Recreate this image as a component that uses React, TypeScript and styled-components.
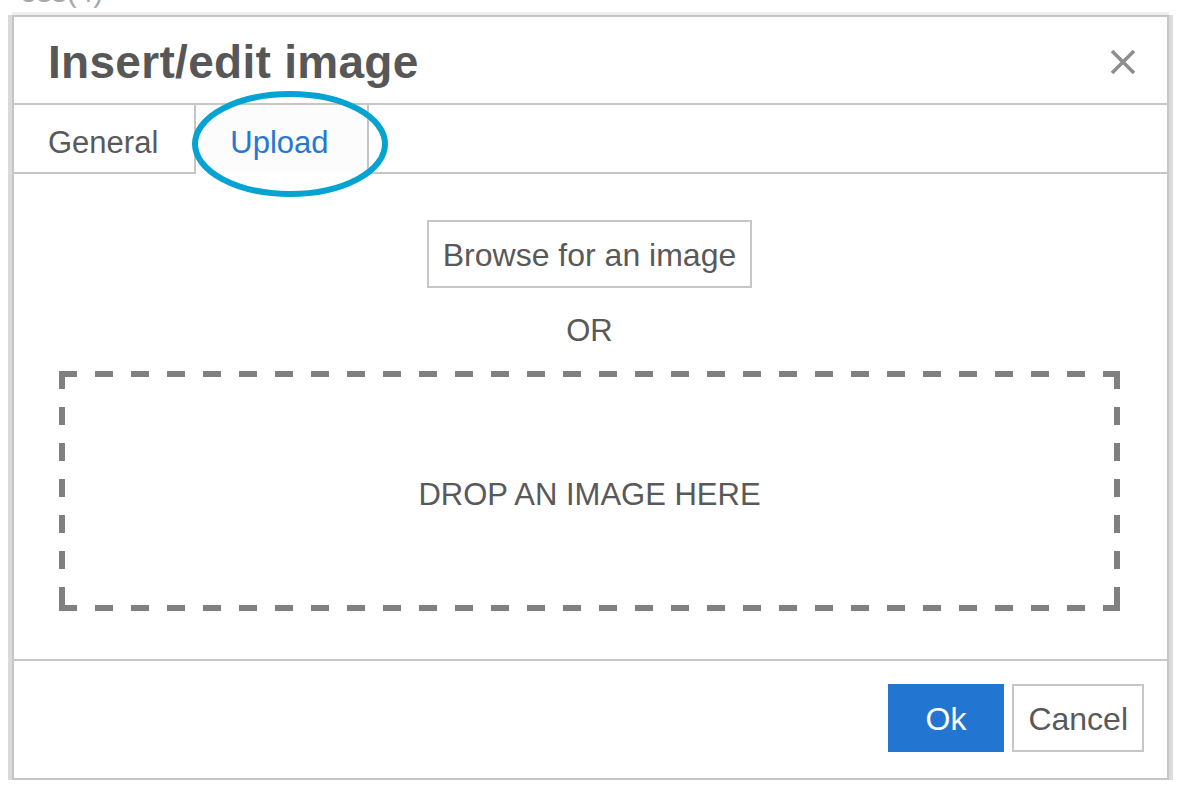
import React from "react";
import styled, { createGlobalStyle } from "styled-components";

const GlobalStyle = createGlobalStyle`
  body {
    margin: 0;
    background: #ffffff;
    font-family: "Liberation Sans", Arial, Helvetica, sans-serif;
    color: #595959;
  }
`;

const tabs = ["General", "Upload"];

export default function App() {
  const active = 1;

  return (
    <Page>
      <GlobalStyle />
      <TopStrip>
        <PageText>ess(4)</PageText>
      </TopStrip>
      <Dialog>
        <Header>
          <Title>Insert/edit image</Title>
          <CloseButton aria-label="Close">
            <svg width="26" height="26" viewBox="0 0 26 26">
              <path
                d="M2 2 L24 24 M24 2 L2 24"
                stroke="#8e8e8e"
                strokeWidth="3.6"
                fill="none"
              />
            </svg>
          </CloseButton>
        </Header>

        <TabBar>
          {tabs.map((t, idx) => (
            <Tab key={t} $active={idx === active}>
              {t}
            </Tab>
          ))}
          <TabFiller />
        </TabBar>

        {/* highlight drawn over the Upload tab */}
        <Highlight width="204" height="112" viewBox="0 0 204 112">
          <ellipse
            cx="102"
            cy="56"
            rx="95"
            ry="50"
            fill="none"
            stroke="#05a3d1"
            strokeWidth="6"
          />
        </Highlight>

        <Body>
          <BrowseButton>Browse for an image</BrowseButton>
          <OrText>OR</OrText>
          <DropZone>DROP AN IMAGE HERE</DropZone>
        </Body>

        <Footer>
          <FootButton $primary>Ok</FootButton>
          <FootButton>Cancel</FootButton>
        </Footer>
      </Dialog>
    </Page>
  );
}

const Page = styled.div`
  width: 1190px;
  height: 798px;
  overflow: hidden;
`;

const TopStrip = styled.div`
  height: 12px;
  overflow: hidden;
  padding-left: 20px;
`;

const PageText = styled.span`
  display: block;
  margin-top: -23px;
  font-size: 30px;
  line-height: 30px;
  color: #a8a8a8;
`;

const Dialog = styled.div`
  position: relative;
  box-sizing: border-box;
  width: 1157px;
  height: 765px;
  margin: 3px 0 0 12px;
  border: 2px solid #c6c6c6;
  background: #ffffff;
  display: flex;
  flex-direction: column;
  box-shadow: -4px 0 0 0 #dadada, 4px 0 0 0 #dcdcdc, 0 -3px 0 0 #ededed;
`;

const Header = styled.div`
  height: 86px;
  display: flex;
  align-items: center;
  justify-content: space-between;
  padding: 0 31px 0 34px;
  border-bottom: 2px solid #c6c6c6;
`;

const Title = styled.h1`
  margin: 0;
  font-size: 46px;
  font-weight: 700;
  letter-spacing: 0.3px;
  color: #575757;
  line-height: 1;
  padding-top: 4px;
`;

const CloseButton = styled.button`
  border: none;
  background: none;
  padding: 0;
  display: flex;
  margin-top: 4px;
`;

const TabBar = styled.div`
  display: flex;
  height: 69px;
`;

const Tab = styled.div<{ $active?: boolean }>`
  display: flex;
  align-items: center;
  padding: ${(p) => (p.$active ? "8px 38px 0 34px" : "8px 36px 0 34px")};
  font-size: 31px;
  color: ${(p) => (p.$active ? "#2677d4" : "#595959")};
  background: ${(p) => (p.$active ? "#fcfcfc" : "#ffffff")};
  border-right: 2px solid #c6c6c6;
  border-bottom: 2px solid ${(p) => (p.$active ? "transparent" : "#c6c6c6")};
`;

const TabFiller = styled.div`
  flex: 1;
  border-bottom: 2px solid #c6c6c6;
`;

const Highlight = styled.svg`
  position: absolute;
  left: 174px;
  top: 71px;
`;

const Body = styled.div`
  height: 487px;
  box-sizing: border-box;
  padding: 46px 47px 48px 45px;
  display: flex;
  flex-direction: column;
  align-items: center;
  border-bottom: 2px solid #c6c6c6;
`;

const BrowseButton = styled.button`
  box-sizing: border-box;
  height: 68px;
  padding: 3px 14px 0;
  border: 2px solid #c6c6c6;
  background: #ffffff;
  font-family: inherit;
  font-size: 32px;
  color: #595959;
`;

const OrText = styled.div`
  height: 84px;
  box-sizing: border-box;
  padding-top: 4px;
  display: flex;
  align-items: center;
  font-size: 31px;
  color: #595959;
`;

const dash = "#808080 0 18px, transparent 18px 36px";

const DropZone = styled.div`
  box-sizing: border-box;
  width: 100%;
  height: 241px;
  padding-top: 8px;
  background:
    repeating-linear-gradient(to right, ${dash}) left top / 100% 6px no-repeat,
    repeating-linear-gradient(to right, ${dash}) left bottom / 100% 6px no-repeat,
    repeating-linear-gradient(to bottom, ${dash}) left top / 6px 100% no-repeat,
    repeating-linear-gradient(to bottom, ${dash}) right top / 6px 100% no-repeat;
  display: flex;
  align-items: center;
  justify-content: center;
  font-size: 31px;
  color: #595959;
`;

const Footer = styled.div`
  flex: 1;
  display: flex;
  justify-content: flex-end;
  align-items: flex-start;
  gap: 8px;
  padding: 23px 23px 0 0;
`;

const FootButton = styled.button<{ $primary?: boolean }>`
  box-sizing: border-box;
  height: 68px;
  padding: ${(p) => (p.$primary ? "3px 36px 0" : "3px 14px 0")};
  border: 2px solid ${(p) => (p.$primary ? "#2276d2" : "#c6c6c6")};
  background: ${(p) => (p.$primary ? "#2276d2" : "#ffffff")};
  color: ${(p) => (p.$primary ? "#ffffff" : "#595959")};
  font-family: inherit;
  font-size: 32px;
`;
